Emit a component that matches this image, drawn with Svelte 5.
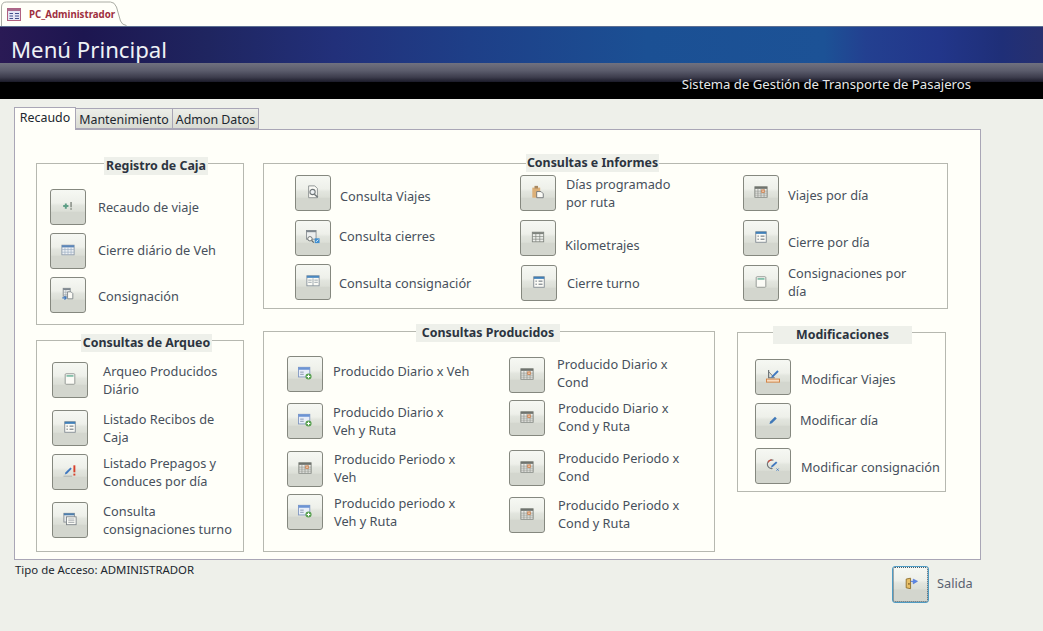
<script>
	const it = (icon, text, gap, ty, ml = 10, dx = 0) => ({ icon, text, gap, ty, ml, dx });

	const groups = {
		caja: {
			title: 'Registro de Caja',
			cols: [
				{
					pad: 13,
					items: [
						it('plusbang', ['Recaudo de viaje'], 25, 9, 12),
						it('calblue', ['Cierre diário de Veh'], 8, 8, 12),
						it('copy', ['Consignación'], 8, 10, 12)
					]
				}
			]
		},
		arqueo: {
			title: 'Consultas de Arqueo',
			cols: [
				{
					pad: 15,
					items: [
						it('single', ['Arqueo Producidos', 'Diário'], 21, 0, 15),
						it('list', ['Listado Recibos de', 'Caja'], 12, 0, 15),
						it('editbang', ['Listado Prepagos y', 'Conduces por día'], 8, 0, 15),
						it('stack', ['Consulta', 'consignaciones turno'], 12, 0, 15)
					]
				}
			]
		},
		informes: {
			title: 'Consultas e Informes',
			cols: [
				{
					pad: 31,
					w: 225,
					items: [
						it('query', ['Consulta Viajes'], 11, 12, 9),
						it('calsearch', ['Consulta cierres'], 9, 7, 8),
						it('split', ['Consulta consignaciór'], 8, 10, 8)
					]
				},
				{
					w: 223,
					items: [
						it('clip', ['Días programado', 'por ruta'], 11, 0, 10),
						it('table', ['Kilometrajes'], 9, 16, 9),
						it('list', ['Cierre turno'], 9, 9, 10, 1)
					]
				},
				{
					items: [
						it('calorange', ['Viajes por día'], 11, 11, 9),
						it('list', ['Cierre por día'], 9, 13, 9),
						it('single', ['Consignaciones por', 'día'], 9, -1, 9)
					]
				}
			]
		},
		producidos: {
			title: 'Consultas Producidos',
			cols: [
				{
					pad: 23,
					w: 222,
					items: [
						it('formplus', ['Producido Diario x Veh'], 24, 6, 10),
						it('formplus', ['Producido Diario x', 'Veh y Ruta'], 11, 0, 10),
						it('calorange', ['Producido Periodo x', 'Veh'], 12, -1, 11),
						it('formplus', ['Producido periodo x', 'Veh y Ruta'], 7, 0, 11)
					]
				},
				{
					items: [
						it('calorange', ['Producido Diario x', 'Cond'], 25, -2, 12),
						it('calorange', ['Producido Diario x', 'Cond y Ruta'], 7, -1, 13),
						it('calorange', ['Producido Periodo x', 'Cond'], 14, -1, 13),
						it('calorange', ['Producido Periodo x', 'Cond y Ruta'], 11, -1, 13)
					]
				}
			]
		},
		modif: {
			title: 'Modificaciones',
			cols: [
				{
					pad: 17,
					items: [
						it('measure', ['Modificar Viajes'], 26, 11, 10),
						it('pencil', ['Modificar día'], 8, 8, 9),
						it('cycle', ['Modificar consignación'], 9, 10, 10)
					]
				}
			]
		}
	};
</script>

{#snippet icon(name)}
	<svg viewBox="0 0 16 16" width="14" height="14" aria-hidden="true">
		{#if name === 'plusbang'}
			<path d="M2.5 8h6M5.500 5v6" stroke="#5f9f86" stroke-width="2.2" />
			<path d="M11.500 3.500v6" stroke="#8a9088" stroke-width="1.800" />
			<rect x="10.600" y="10.500" width="1.800" height="1.800" fill="#8a9088" />
		{:else if name === 'calblue'}
			<rect x="1" y="2.500" width="14" height="11" fill="#eef1f4" stroke="#8b98a8" />
			<rect x="1" y="2.500" width="14" height="2.500" fill="#5b86b8" />
			<path d="M1 7.500h14M1 10.500h14M4.500 5V13.500M8 5V13.500M11.500 5V13.500" stroke="#9fb0c4" stroke-width="0.800" />
		{:else if name === 'copy'}
			<rect x="2.500" y="1.500" width="8" height="9" fill="#eef0f0" stroke="#858c90" />
			<rect x="2.500" y="1.500" width="8" height="2" fill="#7f8890" />
			<path d="M2.500 6h8M2.500 8.500h8M5.500 3.500v7" stroke="#a0a8ac" stroke-width="0.700" />
			<path d="M7.500 5.500h4l2 2v6h-6z" fill="#fbfbf6" stroke="#7d8488" />
			<path d="M1.500 12.500h4M4 10.500l2 2-2 2" fill="none" stroke="#3f78c0" stroke-width="1.300" />
		{:else if name === 'single'}
			<rect x="2.500" y="2" width="11" height="12" rx="1" fill="#fbfbf6" stroke="#8a8f8c" />
			<path d="M4 4.500h8" stroke="#3f9d7e" stroke-width="1.300" />
		{:else if name === 'list'}
			<rect x="2" y="2" width="12" height="12" fill="#fbfbf6" stroke="#7f8790" />
			<rect x="2" y="2" width="12" height="2.400" fill="#3f7fb8" />
			<path d="M4 7h1.500M7.500 7h4.500M4 10.500h1.500M7.500 10.500h4.500" stroke="#5c6670" stroke-width="1.100" />
		{:else if name === 'editbang'}
			<path d="M0.500 14h10" stroke="#b8bcb8" stroke-width="1.500" />
			<path d="M2 12l1-2.500 5.500-5.500 1.500 1.500-5.500 5.500z" fill="#3f78c0" />
			<path d="M13 1.500v8" stroke="#d8402c" stroke-width="2.200" />
			<rect x="11.900" y="11" width="2.200" height="2.200" fill="#d8402c" />
		{:else if name === 'stack'}
			<rect x="1" y="1.500" width="12" height="10" fill="#e6e9ea" stroke="#868c92" />
			<rect x="1" y="1.500" width="12" height="2.200" fill="#4d7fae" />
			<rect x="4" y="5.500" width="11" height="9" fill="#fbfbf6" stroke="#7b8288" />
			<path d="M6 8h7M6 10h7M6 12h7" stroke="#8f969c" stroke-width="0.800" />
		{:else if name === 'query'}
			<path d="M3 1h7l3 3v10.500H3z" fill="#fbfbf6" stroke="#868c8c" />
			<circle cx="7.500" cy="8" r="3" fill="#eef2f4" stroke="#6f7678" stroke-width="1.200" />
			<path d="M9.500 10.500l4 3.500" stroke="#6f7678" stroke-width="1.700" />
		{:else if name === 'calsearch'}
			<rect x="0.500" y="0.500" width="11" height="10" fill="#eceeee" stroke="#878c90" />
			<rect x="0.500" y="0.500" width="11" height="2" fill="#7f8890" />
			<circle cx="4.500" cy="10" r="2.500" fill="#fbfbf6" stroke="#5f6668" />
			<path d="M6.500 12l2.500 2.500" stroke="#5f6668" stroke-width="1.300" />
			<rect x="10" y="9.500" width="5.500" height="5.500" fill="#3f8ed0" />
			<path d="M11.500 13.500l2.500-2.500" stroke="#fff" />
		{:else if name === 'split'}
			<rect x="1" y="2" width="14" height="11.500" fill="#fbfbf6" stroke="#85909a" />
			<rect x="1" y="2" width="14" height="2.400" fill="#4a88c0" />
			<path d="M8 5v8.500M2.500 7h4M2.500 9.500h4M9.500 7h4M9.500 9.500h4" stroke="#8a96a0" stroke-width="0.900" />
		{:else if name === 'clip'}
			<rect x="1.500" y="3" width="9" height="11.500" fill="#dcb078" />
			<rect x="4" y="1" width="4" height="3" fill="#a88860" />
			<path d="M6.500 7.500h5l2.500 2.500v4.500H6.500z" fill="#fbfbf6" stroke="#6a6f72" />
		{:else if name === 'table'}
			<rect x="1.500" y="2.500" width="13" height="11" fill="#eef0ec" stroke="#7f847e" />
			<rect x="1.500" y="2.500" width="13" height="2.200" fill="#7f847e" />
			<path d="M1.500 7.500h13M1.500 10.500h13M5.500 3v10.500M10 3v10.500" stroke="#7f847e" stroke-width="0.800" />
		{:else if name === 'calorange'}
			<rect x="1" y="2" width="14" height="12" fill="#eeeeea" stroke="#7d817b" />
			<rect x="1" y="2" width="14" height="2.400" fill="#6f736e" />
			<path d="M1 7h14M1 9.300h14M1 11.600h14M4.500 4.400v9.600M8 4.400v9.600M11.500 4.400v9.600" stroke="#8f938d" stroke-width="0.800" />
			<rect x="9" y="5.700" width="2.600" height="2.600" fill="#fff" stroke="#d0763a" stroke-width="1.100" />
		{:else if name === 'formplus'}
			<rect x="0.500" y="1.500" width="13" height="11" fill="#e8eef8" stroke="#7f96c0" />
			<rect x="0.500" y="1.500" width="13" height="2.800" fill="#6c94d4" />
			<path d="M2.500 7h4M2.500 9.500h4" stroke="#7f8fa8" />
			<circle cx="12" cy="12" r="3.500" fill="#58a050" />
			<path d="M10 12h4M12 10v4" stroke="#fff" stroke-width="1.200" />
		{:else if name === 'measure'}
			<path d="M3 1v9h7" fill="none" stroke="#6a7074" stroke-width="1.300" />
			<path d="M3.500 3.500l5 5.500" stroke="#6a7074" />
			<path d="M6.500 8l6.500-6.500 1.500 1.500-6.500 6.500-2 .500z" fill="#3f78c0" />
			<rect x="0.500" y="11.500" width="15" height="3.500" fill="#f8dcc0" stroke="#cf7c3c" />
		{:else if name === 'pencil'}
			<path d="M4 12.500l.800-2.800 5.500-5.500 2 2-5.500 5.500z" fill="#3f78b8" />
		{:else if name === 'cycle'}
			<path d="M8.500 2.500a5 5 0 1 0-1 9.500" fill="none" stroke="#70767a" stroke-width="1.300" />
			<path d="M2.500 5a3.500 3.500 0 0 1 4-2.500" fill="none" stroke="#d04a3a" stroke-width="1.400" />
			<path d="M5.500 11l1-2.500 5-4.500 1.500 1.500-5 4.500z" fill="#3f78c0" />
			<path d="M12 12l2.500 2.500M14.500 12L12 14.500" stroke="#3f78c0" />
		{:else if name === 'exit'}
			<path d="M2.500 3.500l5-1v12l-5-1z" fill="#e8c068" stroke="#8c6c28" />
			<rect x="5" y="8" width="1.300" height="2" fill="#6c4c18" />
			<path d="M7.500 6h3V3.500L15.500 6l-5 3V6.800z" fill="#5a88e8" stroke="#4a70d0" stroke-width="0.600" />
		{/if}
	</svg>
{/snippet}

{#snippet group(key, cls)}
	{@const g = groups[key]}
	<section class="group {cls}">
		<h2 class="legend">{g.title}</h2>
		{#each g.cols as col}
			<div class="col" style:padding-left="{col.pad ?? 0}px" style:flex-basis={col.w ? `${col.w + (col.pad ?? 0)}px` : 'auto'}>
				{#each col.items as item}
					<div class="item" style:margin-top="{item.gap}px" style:margin-left="{item.dx}px">
						<button class="tool" type="button">{@render icon(item.icon)}</button>
						<div class="label" style:margin-top="{item.ty}px" style:margin-left="{item.ml}px">
							{#each item.text as line}<div>{line}</div>{/each}
						</div>
					</div>
				{/each}
			</div>
		{/each}
	</section>
{/snippet}

<div class="page">
	<div class="docbar">
		<div class="doctab">
			<svg class="tabshape" viewBox="0 0 128 26" width="128" height="26" aria-hidden="true">
				<path d="M0.500 26V7q0-5 5-5h104q4 0 6 5l4 14q1.500 4 6 4.500" fill="#fffff9" stroke="#aaaca4" />
			</svg>
			<svg class="tabicon" viewBox="0 0 14 13" width="14" height="13" aria-hidden="true">
				<rect x="0.500" y="0.500" width="13" height="12" fill="#e6e6f4" stroke="#b06080" />
				<rect x="0.500" y="0.500" width="13" height="2.500" fill="#a86a8c" />
				<path d="M2.500 5.500h3.500M2.500 8h3.500M2.500 10.500h3.500M8 5.500h4M8 8h4M8 10.500h4" stroke="#44508c" />
			</svg>
			<span class="tabname">PC_Administrador</span>
		</div>
	</div>

	<header class="banner">
		<div class="band"><h1>Menú Principal</h1></div>
		<div class="strip"><span>Sistema de Gestión de Transporte de Pasajeros</span></div>
	</header>

	<main class="content">
		<nav class="tabs">
			<div class="tab active">Recaudo</div>
			<div class="tab t2">Mantenimiento</div>
			<div class="tab t3">Admon Datos</div>
		</nav>

		<div class="panel">
			<div class="left">
				{@render group('caja', 'caja')}
				{@render group('arqueo', 'arqueo')}
			</div>
			<div class="right">
				{@render group('informes', 'informes')}
				<div class="lower">
					{@render group('producidos', 'producidos')}
					{@render group('modif', 'modif')}
				</div>
			</div>
		</div>

		<footer class="foot">
			<span class="access">Tipo de Acceso: ADMINISTRADOR</span>
			<div class="exit">
				<button class="tool focus" type="button">{@render icon('exit')}</button>
				<span class="exitlabel">Salida</span>
			</div>
		</footer>
	</main>
</div>

<style>
	:global(body) {
		background: #eef0ea;
		overflow: hidden;
	}

	.page {
		width: 1043px;
		height: 631px;
		overflow: hidden;
		font-family: 'Noto Sans', 'Open Sans', sans-serif;
		background: #eef0ea;
	}

	.docbar {
		height: 26px;
		background: #fffff9;
	}

	.doctab {
		position: relative;
		width: 124px;
		height: 26px;
		display: flex;
		align-items: center;
		padding: 3px 0 0 7px;
		box-sizing: border-box;
	}

	.tabshape {
		position: absolute;
		left: 1px;
		top: 0;
	}

	.tabicon {
		position: relative;
		flex: none;
	}

	.tabname {
		position: relative;
		margin-left: 8px;
		font-size: 9.700px;
		font-weight: 700;
		color: #9e2f3e;
		white-space: nowrap;
	}

	.banner {
		height: 73px;
		display: flex;
		flex-direction: column;
	}

	.band {
		height: 37px;
		box-sizing: border-box;
		border-top: 1px solid #5d6f92;
		background: linear-gradient(90deg, #2a1a55 0, #1d1650 8%, #1f2560 20%, #22307a 32%, #1e3f88 45%, #1b5094 62%, #1c5296 79%, #234090 83%, #22368a 90%, #1f2f78 96%, #27306f 100%);
		padding-left: 11px;
	}

	h1 {
		margin: 0;
		font-size: 22.200px;
		font-weight: 400;
		line-height: 45px;
		color: #eef1f5;
		white-space: nowrap;
	}

	.strip {
		height: 36px;
		background: linear-gradient(180deg, #70717f 0, #5a5b6b 22%, #3c3c4c 40%, #1c1c2a 52%, #000 54%, #000 100%);
		display: flex;
		justify-content: flex-end;
		padding-right: 72px;
	}

	.strip span {
		margin-top: 11px;
		font-size: 13.140px;
		line-height: 20px;
		color: #e6e8ea;
	}

	.content {
		padding: 8px 0 0 14px;
	}

	.tabs {
		display: flex;
		height: 22px;
		align-items: flex-end;
		position: relative;
		z-index: 1;
	}

	.tab {
		box-sizing: border-box;
		height: 21px;
		border: 1px solid #a9a6b6;
		background: linear-gradient(180deg, #eceee8, #d9dbd3);
		font-size: 12.400px;
		line-height: 21px;
		text-align: center;
		color: #20262e;
		white-space: nowrap;
	}

	.tab.active {
		width: 62px;
		height: 23px;
		margin-bottom: -1px;
		border-bottom: 0;
		background: #fffff9;
		line-height: 20px;
	}

	.t2 {
		width: 97px;
		border-left: 0;
	}

	.t3 {
		width: 86px;
		border-left: 0;
	}

	.panel {
		box-sizing: border-box;
		width: 967px;
		height: 431px;
		border: 1px solid #a9a6b6;
		background: #fffff9;
		padding: 33px 0 0 21px;
		display: flex;
		gap: 19px;
	}

	.left {
		width: 208px;
		display: flex;
		flex-direction: column;
		gap: 15px;
	}

	.right {
		display: flex;
		flex-direction: column;
		gap: 22px;
	}

	.lower {
		display: flex;
		gap: 22px;
		align-items: flex-start;
	}

	.group {
		position: relative;
		box-sizing: border-box;
		display: flex;
		border: 1px solid #b6b8b0;
	}

	.caja {
		height: 162px;
	}

	.arqueo {
		height: 212px;
	}

	.informes {
		width: 685px;
		height: 146px;
	}

	.producidos {
		width: 452px;
		height: 221px;
	}

	.modif {
		width: 209px;
		height: 160px;
		margin-top: 1px;
	}

	.legend {
		position: absolute;
		margin: 0;
		height: 18px;
		background: #eef0ea;
		font-size: 12.400px;
		font-weight: 700;
		line-height: 18px;
		text-align: center;
		color: #2c3440;
		white-space: nowrap;
	}

	.caja .legend {
		left: 67px;
		top: -7px;
		width: 104px;
	}

	.arqueo .legend {
		left: 44px;
		top: -7px;
		width: 131px;
	}

	.informes .legend {
		left: 262px;
		top: -10px;
		width: 133px;
	}

	.producidos .legend {
		left: 152px;
		top: -8px;
		width: 144px;
	}

	.modif .legend {
		left: 35px;
		top: -7px;
		width: 139px;
	}

	.col {
		flex: 0 0 auto;
		box-sizing: border-box;
	}

	.item {
		display: flex;
		align-items: flex-start;
	}

	.tool {
		flex: none;
		box-sizing: border-box;
		width: 36px;
		height: 36px;
		padding: 0 0 3px;
		display: flex;
		align-items: center;
		justify-content: center;
		border: 1px solid #85887f;
		border-radius: 3px;
		background: linear-gradient(180deg, #f6f8f3 0, #eef0ea 38%, #e2e5de 46%, #dcdfd7 62%, #d3d6ce 66%, #d3d6ce 100%);
	}

	.focus {
		width: 37px;
		height: 37px;
		border: 1px solid #4f9cc4;
		outline: 1px dotted #4a5a66;
		outline-offset: -2px;
	}

	.label {
		font-size: 12.750px;
		line-height: 18px;
		color: #47505c;
		white-space: nowrap;
	}

	.foot {
		width: 958px;
		display: flex;
		justify-content: space-between;
		align-items: flex-start;
	}

	.access {
		margin: 2px 0 0 1px;
		font-size: 11.400px;
		line-height: 16px;
		color: #20262e;
	}

	.exit {
		display: flex;
		align-items: center;
		margin-top: 6px;
		width: 80px;
		gap: 8px;
	}

	.exitlabel {
		font-size: 12.750px;
		line-height: 18px;
		margin-top: -3px;
		color: #5a6270;
	}
</style>
